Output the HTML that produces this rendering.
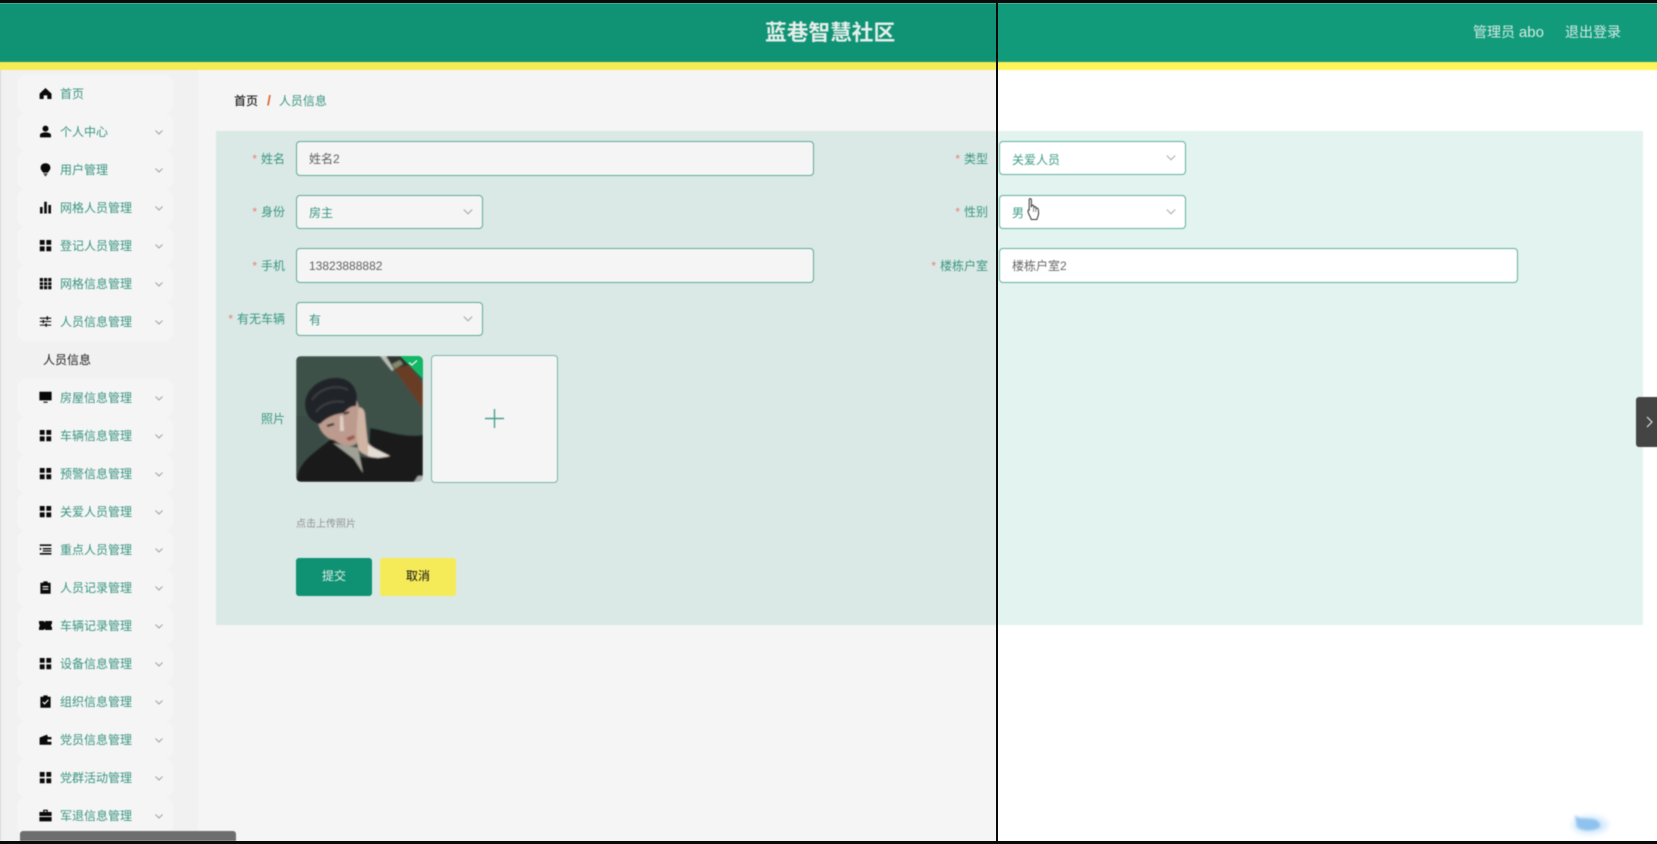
<!DOCTYPE html>
<html lang="zh">
<head>
<meta charset="utf-8">
<title>蓝巷智慧社区</title>
<style>
*{box-sizing:border-box;margin:0;padding:0}
html,body{width:1657px;height:844px;overflow:hidden;background:#fff}
body{position:relative;font-family:"Liberation Sans","Noto Sans CJK SC",sans-serif;font-size:12px}
#page{position:absolute;left:-6px;top:-6px;width:1669px;height:856px;filter:blur(.45px);overflow:hidden}
#inner{position:absolute;left:6px;top:6px;width:1657px;height:844px}
.a{position:absolute}
#hd{left:-6px;top:3px;width:1669px;height:59px;background:#119b7b}
#hdl{left:-6px;top:3px;width:1002px;height:59px;background:rgba(0,0,0,.012)}
#yl{left:-6px;top:62px;width:1669px;height:8px;background:#fff559}
#title{left:765px;top:17px;line-height:32px;font-size:21.700px;font-weight:bold;color:#f0f8f5;white-space:nowrap}
.ht{top:21px;line-height:22px;font-size:14px;color:#d5ebe4;white-space:nowrap}
#strip{left:-6px;top:70px;width:6px;height:771px;background:#e4e4e4}
#side{left:0;top:70px;width:198px;height:771px;background:#fbfbfb;border-left:1px solid #e4e4e4}
.it{position:absolute;left:17px;width:156px;height:38px;background:#fff;border-radius:9px}
.it span{position:absolute;left:43px;top:1px;line-height:37px;font-size:12px;color:#3d9c88;white-space:nowrap}
.it .ic{position:absolute;left:22px;top:12px;width:13px;height:13px;fill:#0a0a0a}
.it .cv{position:absolute;left:138px;top:17px;width:8px;height:5px;fill:none;stroke:#a8a8a8;stroke-width:1}
.sub{position:absolute;left:43px;top:351px;line-height:18px;font-size:12px;color:#222;white-space:nowrap}
#bc{left:234px;top:91px;line-height:18px;font-size:12px;white-space:nowrap}
#form{left:216px;top:131px;width:1427px;height:494px;background:#e3f3ef}
.lb{position:absolute;width:90px;text-align:right;line-height:18px;font-size:12px;color:#3d9c88;white-space:nowrap}
.lb i{font-style:normal;color:#f0857c;margin-right:4px}
.f{position:absolute;height:35px;background:#fff;border:1.5px solid #62b09e;border-radius:4px;line-height:35px;padding-left:12px;font-size:12px;color:#666;white-space:nowrap}
.s{color:#3d9c88;height:34px;line-height:35px}
.f svg{position:absolute;right:9px;top:13px;width:10px;height:6px;fill:none;stroke:#b5b5b5;stroke-width:1}
.btn{position:absolute;top:558px;width:76px;height:38px;border-radius:3px;text-align:center;line-height:37px;font-size:12px}
#shade{left:-6px;top:3px;width:1002px;height:838px;background:rgba(0,0,0,.04)}
#line{left:996px;top:0;width:1.500px;height:844px;background:#0a0a0a}
#tb{left:0;top:0;width:1657px;height:3px;background:#0a0a0a}
#bb{left:0;top:841px;width:1657px;height:3px;background:#0a0a0a}
#sb{left:20px;top:831px;width:216px;height:10px;background:#6e6e6e;border-radius:3px 3px 0 0}
#tg{left:1636px;top:397px;width:27px;height:50px;background:#444;border-radius:3px 0 0 3px}
</style>
</head>
<body>
<svg width="0" height="0" style="position:absolute">
<defs>
<symbol id="home" viewBox="0 0 13 13"><path d="M6.5 1 12.5 6.6V12H8.3V8.4H4.7V12H.6V6.6Z"/></symbol>
<symbol id="user" viewBox="0 0 13 13"><circle cx="6.5" cy="3.6" r="3"/><path d="M1 12.4V10C1 8.2 4 7.4 6.5 7.4S12 8.2 12 10V12.4Z"/></symbol>
<symbol id="bulb" viewBox="0 0 13 13"><path d="M6.5 .3C3.4.3 1.6 2.4 1.6 4.8 1.6 6.8 3 7.9 4 9.6H9C10 7.9 11.4 6.8 11.4 4.8 11.4 2.4 9.6.3 6.5.3Z"/><path d="M4.6 10.5H8.4V11.5H4.6ZM5.5 12H7.5V13H5.5Z"/></symbol>
<symbol id="bars" viewBox="0 0 13 13"><path d="M1 6H3.6V12.5H1ZM5.2.8H7.8V12.5H5.2ZM9.4 4H12V12.5H9.4Z"/></symbol>
<symbol id="grid" viewBox="0 0 13 13"><path d="M.8 1H5.6V5.8H.8ZM7.4 1H12.2V5.8H7.4ZM.8 7.4H5.6V12.2H.8ZM7.4 7.4H12.2V12.2H7.4Z"/></symbol>
<symbol id="g3" viewBox="0 0 13 13"><path d="M.8 1H4V4.4H.8ZM5 1H8.2V4.4H5ZM9.2 1H12.4V4.4H9.2ZM.8 5.2H4V8.2H.8ZM5 5.2H8.2V8.2H5ZM9.2 5.2H12.4V8.2H9.2ZM.8 9H4V12.2H.8ZM5 9H8.2V12.2H5ZM9.2 9H12.4V12.2H9.2Z"/></symbol>
<symbol id="sl" viewBox="0 0 13 13"><path d="M.8 2.6H7.6V1.2H9V2.6H12.2V3.7H9V5H7.6V3.7H.8ZM.8 6H3.6V4.9H5V6H12.2V7H5V8.2H3.6V7H.8ZM.8 9.6H6.4V8.4H7.8V9.6H12.2V10.6H7.8V11.8H6.4V10.6H.8Z"/></symbol>
<symbol id="mon" viewBox="0 0 13 13"><path d="M.4 .8H12.6V9.4H.4ZM4.4 10.6H8.6V11.8H4.4Z"/></symbol>
<symbol id="lines" viewBox="0 0 13 13"><path d="M.8 1.4H12.4V3H.8ZM3.8 5H12.4V6.4H3.8ZM.8 4.4 2.8 6 .8 7.4ZM3.8 7.4H12.4V8.6H3.8ZM.8 10H12.4V11.6H.8Z"/></symbol>
<symbol id="clip" viewBox="0 0 13 13"><path fill-rule="evenodd" d="M4.4 .4H8.6V1.8H11.6V12.8H1.4V1.8H4.4ZM3.6 5V6.2H9.4V5ZM3.6 7.6V8.8H9.4V7.6Z"/></symbol>
<symbol id="tick" viewBox="0 0 13 13"><path d="M-.2 2H4.8L5.6 3.4 6.4 2H13.2V4.6C11.8 5 11.8 8 13.2 8.4V11H6.4L5.6 9.6 4.8 11H-.2V8.4C1 8 1 5 -.2 4.6Z"/></symbol>
<symbol id="chk" viewBox="0 0 13 13"><path fill-rule="evenodd" d="M4.4 .4H8.6V1.8H11.6V12.8H1.4V1.8H4.4ZM3.4 7.4 5.6 9.8 9.8 5.2 8.9 4.4 5.6 8 4.3 6.5Z"/></symbol>
<symbol id="wal" viewBox="0 0 13 13"><path fill-rule="evenodd" d="M.6 4.6 8 1.6 9 4H12.4V6.4H8.4V8.8H12.4V11.8H.6Z"/></symbol>
<symbol id="brf" viewBox="0 0 13 13"><path fill-rule="evenodd" d="M4.2 .8H8.8V3H12.6V7H.4V3H4.2ZM5.4 2V3H7.6V2ZM.4 8H12.6V12.4H.4Z"/></symbol>
<symbol id="dn" viewBox="0 0 8 5"><path d="M.5 .5 4 4 7.5 .5"/></symbol>
</defs>
</svg>
<div id="page"><div id="inner">
<div class="a" id="hd"></div>
<div class="a" id="hdl"></div>
<div class="a" id="yl"></div>
<div class="a" id="title">蓝巷智慧社区</div>
<div class="a ht" style="left:1473px">管理员 <span style="font-size:15px">abo</span></div>
<div class="a ht" style="left:1565px">退出登录</div>

<div class="a" id="strip"></div>
<div class="a" id="side">
<div class="it" style="top:5px;left:16px"><svg class="ic"><use href="#home"/></svg><span>首页</span></div>
<div class="it" style="top:43px;left:16px"><svg class="ic"><use href="#user"/></svg><span>个人中心</span><svg class="cv"><use href="#dn"/></svg></div>
<div class="it" style="top:81px;left:16px"><svg class="ic"><use href="#bulb"/></svg><span>用户管理</span><svg class="cv"><use href="#dn"/></svg></div>
<div class="it" style="top:119px;left:16px"><svg class="ic"><use href="#bars"/></svg><span>网格人员管理</span><svg class="cv"><use href="#dn"/></svg></div>
<div class="it" style="top:157px;left:16px"><svg class="ic"><use href="#grid"/></svg><span>登记人员管理</span><svg class="cv"><use href="#dn"/></svg></div>
<div class="it" style="top:195px;left:16px"><svg class="ic"><use href="#g3"/></svg><span>网格信息管理</span><svg class="cv"><use href="#dn"/></svg></div>
<div class="it" style="top:233px;left:16px"><svg class="ic"><use href="#sl"/></svg><span>人员信息管理</span><svg class="cv"><use href="#dn"/></svg></div>
<div class="sub" style="top:281px;left:42px">人员信息</div>
<div class="it" style="top:309px;left:16px"><svg class="ic"><use href="#mon"/></svg><span>房屋信息管理</span><svg class="cv"><use href="#dn"/></svg></div>
<div class="it" style="top:347px;left:16px"><svg class="ic"><use href="#grid"/></svg><span>车辆信息管理</span><svg class="cv"><use href="#dn"/></svg></div>
<div class="it" style="top:385px;left:16px"><svg class="ic"><use href="#grid"/></svg><span>预警信息管理</span><svg class="cv"><use href="#dn"/></svg></div>
<div class="it" style="top:423px;left:16px"><svg class="ic"><use href="#grid"/></svg><span>关爱人员管理</span><svg class="cv"><use href="#dn"/></svg></div>
<div class="it" style="top:461px;left:16px"><svg class="ic"><use href="#lines"/></svg><span>重点人员管理</span><svg class="cv"><use href="#dn"/></svg></div>
<div class="it" style="top:499px;left:16px"><svg class="ic"><use href="#clip"/></svg><span>人员记录管理</span><svg class="cv"><use href="#dn"/></svg></div>
<div class="it" style="top:537px;left:16px"><svg class="ic"><use href="#tick"/></svg><span>车辆记录管理</span><svg class="cv"><use href="#dn"/></svg></div>
<div class="it" style="top:575px;left:16px"><svg class="ic"><use href="#grid"/></svg><span>设备信息管理</span><svg class="cv"><use href="#dn"/></svg></div>
<div class="it" style="top:613px;left:16px"><svg class="ic"><use href="#chk"/></svg><span>组织信息管理</span><svg class="cv"><use href="#dn"/></svg></div>
<div class="it" style="top:651px;left:16px"><svg class="ic"><use href="#wal"/></svg><span>党员信息管理</span><svg class="cv"><use href="#dn"/></svg></div>
<div class="it" style="top:689px;left:16px"><svg class="ic"><use href="#grid"/></svg><span>党群活动管理</span><svg class="cv"><use href="#dn"/></svg></div>
<div class="it" style="top:727px;left:16px"><svg class="ic"><use href="#brf"/></svg><span>军退信息管理</span><svg class="cv"><use href="#dn"/></svg></div>
</div>

<div class="a" id="bc"><span style="color:#222;font-weight:500">首页</span><span style="color:#e2622a;font-weight:bold;font-size:14px;margin:0 8px 0 9px">/</span><span style="color:#3d9c88">人员信息</span></div>

<div class="a" id="form"></div>

<div class="lb" style="left:195px;top:150px"><i>*</i>姓名</div>
<div class="f" style="left:296px;top:141px;width:518px">姓名2</div>
<div class="lb" style="left:898px;top:150px"><i>*</i>类型</div>
<div class="f s" style="left:999px;top:141px;width:187px;line-height:36px">关爱人员<svg viewBox="0 0 8 5"><use href="#dn"/></svg></div>

<div class="lb" style="left:195px;top:203px"><i>*</i>身份</div>
<div class="f s" style="left:296px;top:195px;width:187px">房主<svg viewBox="0 0 8 5"><use href="#dn"/></svg></div>
<div class="lb" style="left:898px;top:203px"><i>*</i>性别</div>
<div class="f s" style="left:999px;top:195px;width:187px">男<svg viewBox="0 0 8 5"><use href="#dn"/></svg></div>

<div class="lb" style="left:195px;top:257px"><i>*</i>手机</div>
<div class="f" style="left:296px;top:248px;width:518px">13823888882</div>
<div class="lb" style="left:898px;top:257px"><i>*</i>楼栋户室</div>
<div class="f" style="left:999px;top:248px;width:519px">楼栋户室2</div>

<div class="lb" style="left:195px;top:310px"><i>*</i>有无车辆</div>
<div class="f s" style="left:296px;top:302px;width:187px">有<svg viewBox="0 0 8 5"><use href="#dn"/></svg></div>

<div class="lb" style="left:195px;top:410px">照片</div>

<svg class="a" style="left:296px;top:356px" width="127" height="126" viewBox="0 0 127 126">
<defs><clipPath id="cp"><rect width="127" height="126" rx="5"/></clipPath>
<filter id="ph" x="-5%" y="-5%" width="110%" height="110%"><feGaussianBlur stdDeviation=".7"/></filter></defs>
<g clip-path="url(#cp)"><g filter="url(#ph)">
<rect width="127" height="126" fill="#41554e"/>
<path d="M0 60H40L10 126H0Z" fill="#3c4f49"/>
<path d="M84 0H95L103 9 96 15Z" fill="#c2c6c0"/>
<path d="M90 0H106L116 14 99 15Z" fill="#2f3732"/>
<path d="M96 8 104 4 107 8 99 13Z" fill="#8b8f70"/>
<path d="M98 13 113 9 127 28V53Z" fill="#6e4026"/>
<path d="M1 126C1 116 4 107 21 94L36 82 60 100 73 102 74 72C90 74 106 82 127 79V122L120 126Z" fill="#1c1d1c"/>
<path d="M37 87 52 90 62 92 67 117 58 103Z" fill="#a8a79d"/>
<path d="M22 66 60 42 66 60 62 86C56 93 46 90 38 84 34 84 24 78 22 66Z" fill="#c4a294"/>
<path d="M62 52C66 50 69 55 69 59 70 70 71 80 72 87 78 93 86 97 94 100 86 102 78 102 74 101 68 98 62 96 62 91 59 78 62 64 62 52Z" fill="#d9bcab"/>
<path d="M72 89 94 100 82 102 72 100Z" fill="#eee6de"/>
<path d="M44 60 47 60 48 75 44 75Z" fill="#ecd8cc"/>
<path d="M9 50C8 36 20 24 36 22 52 20 61 30 61 42L60 50C55 50 52 52 48 57 40 58 32 60 24 68 16 66 10 60 9 50Z" fill="#24272b"/>
<path d="M16 44C24 32 40 28 52 34M20 56C26 48 36 44 48 46" stroke="#3c4045" stroke-width="2" fill="none"/>
<path d="M31 70 38 68M48 58 53 56" stroke="#1d1d1d" stroke-width="2"/>
<path d="M50 82 58 79 59 82 53 85Z" fill="#a5584f"/>
<path d="M122 120H127V126H118Z" fill="#b5b9b5"/>
</g>
<path d="M104 0H127V23Z" fill="#13c06a"/>
<path d="M113 6.5 116 9 121 4.5" fill="none" stroke="#fff" stroke-width="1.2"/>
</g>
</svg>

<div class="a" style="left:431px;top:355px;width:127px;height:128px;background:#fff;border:1.6px solid #7dc0b0;border-radius:4px"></div>
<svg class="a" style="left:484px;top:408px" width="21" height="21" viewBox="0 0 21 21"><path d="M10.5 1V20M1 10.5H20" stroke="#4fa593" stroke-width="1.4" fill="none"/></svg>

<div class="a" style="left:296px;top:517px;line-height:16px;font-size:10px;color:#999;white-space:nowrap">点击上传照片</div>

<div class="btn" style="left:296px;background:#0f9878;color:#eef6f3">提交</div>
<div class="btn" style="left:380px;background:#fff45c;color:#111">取消</div>

<div class="a" id="tg"><svg style="position:absolute;left:10px;top:19px" width="7" height="12" viewBox="0 0 7 12"><path d="M1 1 6 6 1 11" fill="none" stroke="#e8e8e8" stroke-width="1.1"/></svg></div>

<svg class="a" style="left:1560px;top:800px" width="60" height="41" viewBox="0 0 60 41">
<defs><filter id="bl" x="-50%" y="-50%" width="200%" height="200%"><feGaussianBlur stdDeviation="3"/></filter><filter id="bl2" x="-40%" y="-40%" width="180%" height="180%"><feGaussianBlur stdDeviation="1.200"/></filter></defs>
<ellipse cx="30" cy="25" rx="18" ry="9" fill="#d4eafc" filter="url(#bl)"/>
<path d="M15 15 19 18 33 19C38 20 41 23 40 27 35 31 23 32 17 27Z" fill="#8fc2ee" filter="url(#bl2)"/>
</svg>

<svg class="a" style="left:1027px;top:198px" width="13" height="23" viewBox="0 0 13 23">
<path d="M2.200 1.800C2.200.3 4.400.3 4.400 1.800V9.200L4.800 7.600C5.400 6.800 6.800 7 6.800 8.200L7 9.200C7.400 8.300 8.800 8.500 9 9.500L9.100 10.500C9.700 9.800 11 10 11.200 11.200 11.800 14 11.800 16.500 10.800 18.700L9.800 21.500H4.200L3.500 19.500C2.500 17.500 1.300 15.500 1 13.500 .8 12 1.600 11.400 2.200 11.900Z" fill="#fff" stroke="#333" stroke-width="1"/>
<path d="M6.500 10V14M8.800 11V14" stroke="#555" stroke-width=".7" fill="none"/>
</svg>

<div class="a" id="shade"></div>
<div class="a" id="sb"></div>
</div></div>
<div class="a" id="line"></div>
<div class="a" id="tb"></div>
<div class="a" id="bb"></div>
</body>
</html>
